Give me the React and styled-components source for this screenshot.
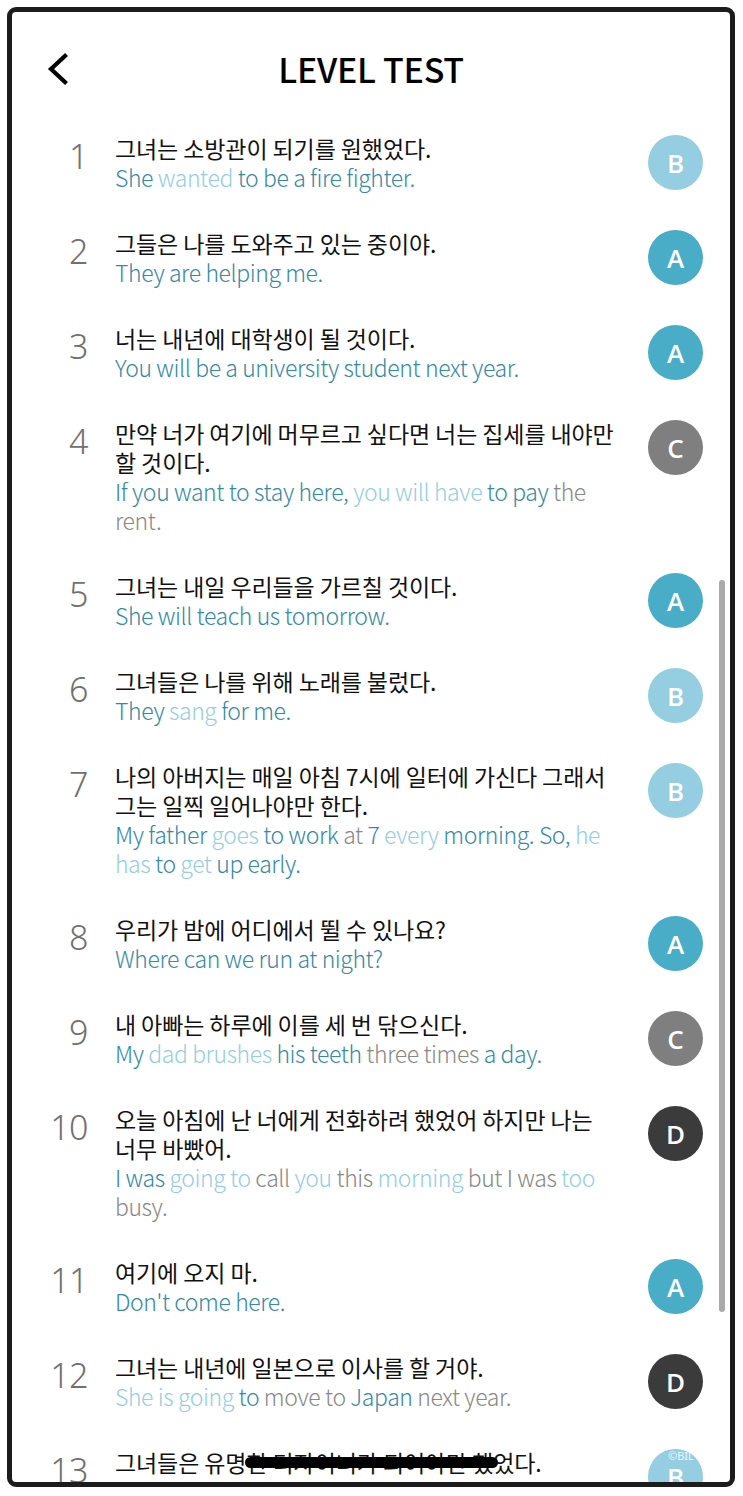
import React from 'react';
import styled, { createGlobalStyle } from 'styled-components';

const GlobalStyle = createGlobalStyle`
  html, body {
    margin: 0;
    padding: 0;
    background: #ffffff;
  }
  body {
    font-family: "Noto Sans CJK KR", "Noto Sans", sans-serif;
  }
`;

const COLORS = {
  d: '#3589a3',
  l: '#94cee0',
  g: '#878787',
};

const GRADES = {
  A: '#4aadc7',
  B: '#94cee0',
  C: '#7f7f7f',
  D: '#3b3b3b',
};

const questions = [
  {
    ko: '그녀는 소방관이 되기를 원했었다.',
    en: [['She', 'd'], [' wanted', 'l'], [' to be a fire fighter.', 'd']],
    grade: 'B',
  },
  {
    ko: '그들은 나를 도와주고 있는 중이야.',
    en: [['They are helping me.', 'd']],
    grade: 'A',
  },
  {
    ko: '너는 내년에 대학생이 될 것이다.',
    en: [['You will be a university student next year.', 'd']],
    grade: 'A',
  },
  {
    ko: '만약 너가 여기에 머무르고 싶다면 너는 집세를 내야만 할 것이다.',
    en: [
      ['If you want to stay here,', 'd'],
      [' you will have', 'l'],
      [' to pay', 'd'],
      [' the rent.', 'g'],
    ],
    grade: 'C',
  },
  {
    ko: '그녀는 내일 우리들을 가르칠 것이다.',
    en: [['She will teach us tomorrow.', 'd']],
    grade: 'A',
  },
  {
    ko: '그녀들은 나를 위해 노래를 불렀다.',
    en: [['They', 'd'], [' sang', 'l'], [' for me.', 'd']],
    grade: 'B',
  },
  {
    ko: '나의 아버지는 매일 아침 7시에 일터에 가신다 그래서 그는 일찍 일어나야만 한다.',
    en: [
      ['My father', 'd'],
      [' goes', 'l'],
      [' to work', 'd'],
      [' at', 'g'],
      [' 7', 'd'],
      [' every', 'l'],
      [' morning. So,', 'd'],
      [' he has', 'l'],
      [' to', 'd'],
      [' get', 'l'],
      [' up early.', 'd'],
    ],
    grade: 'B',
  },
  {
    ko: '우리가 밤에 어디에서 뛸 수 있나요?',
    en: [['Where can we run at night?', 'd']],
    grade: 'A',
  },
  {
    ko: '내 아빠는 하루에 이를 세 번 닦으신다.',
    en: [
      ['My', 'd'],
      [' dad brushes', 'l'],
      [' his teeth', 'd'],
      [' three times', 'g'],
      [' a day.', 'd'],
    ],
    grade: 'C',
  },
  {
    ko: '오늘 아침에 난 너에게 전화하려 했었어 하지만 나는 너무 바빴어.',
    en: [
      ['I was', 'd'],
      [' going to', 'l'],
      [' call', 'g'],
      [' you', 'l'],
      [' this', 'g'],
      [' morning', 'l'],
      [' but I was', 'g'],
      [' too', 'l'],
      [' busy.', 'g'],
    ],
    grade: 'D',
  },
  {
    ko: '여기에 오지 마.',
    en: [["Don't come here.", 'd']],
    grade: 'A',
  },
  {
    ko: '그녀는 내년에 일본으로 이사를 할 거야.',
    en: [
      ['She is going', 'l'],
      [' to', 'd'],
      [' move to', 'g'],
      [' Japan', 'd'],
      [' next year.', 'g'],
    ],
    grade: 'D',
  },
  {
    ko: '그녀들은 유명한 디자이너가 되어야만 했었다.',
    en: [['They had to be famous designers.', 'd']],
    grade: 'B',
    redacted: true,
  },
];

function BackIcon() {
  return (
    <svg width="24" height="36" viewBox="0 0 24 36" fill="none">
      <path
        d="M19 5 L5 18 L19 31"
        stroke="#000"
        strokeWidth="4.2"
        strokeLinecap="square"
        strokeLinejoin="miter"
      />
    </svg>
  );
}

export default function App() {
  return (
    <>
      <GlobalStyle />
      <Frame>
        <Header>
          <BackButton>
            <BackIcon />
          </BackButton>
          <Title>LEVEL TEST</Title>
          <span />
        </Header>
        <List>
          {questions.map((q, i) => (
            <Row key={i}>
              <Num>{i + 1}</Num>
              <Body>
                <Korean>
                  {q.ko}
                  {q.redacted && <Redaction />}
                </Korean>
                <English>
                  {q.en.map(([t, c], j) => (
                    <Word key={j} $tone={c}>
                      {t}
                    </Word>
                  ))}
                </English>
              </Body>
              <Grade $grade={q.grade}>
                {q.redacted && <Watermark>©BIL</Watermark>}
                {q.grade}
              </Grade>
            </Row>
          ))}
        </List>
        <ScrollThumb />
      </Frame>
    </>
  );
}

const Frame = styled.div`
  position: relative;
  box-sizing: border-box;
  margin: 7px 0 0 7px;
  width: 728px;
  height: 1480px;
  border: 5px solid #1c1c1c;
  border-radius: 9px;
  overflow: hidden;
  background: #fff;
`;

const Header = styled.div`
  display: grid;
  grid-template-columns: 1fr auto 1fr;
  align-items: center;
  height: 114px;
  padding: 0 35px;
`;

const BackButton = styled.div`
  display: flex;
  align-items: center;
  margin-left: -1px;
  height: 36px;
`;

const Title = styled.h1`
  margin: 0;
  font-family: "Noto Sans CJK KR", "Noto Sans", sans-serif;
  font-size: 34px;
  font-weight: 500;
  color: #000;
  letter-spacing: -0.3px;
  line-height: 1;
`;

const List = styled.div`
  display: flex;
  flex-direction: column;
  gap: 37px;
  padding: 8px 27px 0 0;
`;

const Row = styled.div`
  display: flex;
  align-items: flex-start;
`;

const Num = styled.div`
  width: 76px;
  flex-shrink: 0;
  text-align: right;
  font-family: "Noto Sans", sans-serif;
  font-size: 34px;
  font-weight: 300;
  color: #707070;
  line-height: 44px;
  letter-spacing: -0.5px;
`;

const Body = styled.div`
  flex: 1;
  min-width: 0;
  margin-left: 27px;
  padding-right: 26px;
`;

const Korean = styled.div`
  position: relative;
  font-size: 23px;
  font-weight: 400;
  line-height: 29px;
  color: #111;
  letter-spacing: -0.1px;
  word-break: keep-all;
`;

const English = styled.div`
  font-size: 23px;
  font-weight: 300;
  line-height: 29px;
  letter-spacing: -0.4px;
`;

const Word = styled.span`
  color: ${(p) => COLORS[p.$tone]};
`;

const Grade = styled.div`
  position: relative;
  flex-shrink: 0;
  display: flex;
  align-items: center;
  justify-content: center;
  width: 55px;
  height: 55px;
  margin-top: 1px;
  border-radius: 50%;
  background: ${(p) => GRADES[p.$grade]};
  color: #fff;
  font-family: "Open Sans", "Noto Sans", sans-serif;
  font-size: 26px;
  font-weight: 600;
  line-height: 1;
`;

const Watermark = styled.span`
  position: absolute;
  top: 1px;
  left: 20px;
  font-family: "Noto Sans", sans-serif;
  font-size: 11px;
  font-weight: 400;
  color: #eef7fa;
  white-space: nowrap;
`;

const Redaction = styled.span`
  position: absolute;
  left: 130px;
  top: 9px;
  width: 253px;
  height: 11px;
  border-radius: 6px;
  background: #000;
`;

const ScrollThumb = styled.div`
  position: absolute;
  left: 707px;
  top: 568px;
  width: 6px;
  height: 732px;
  border-radius: 3px;
  background: #aaaaaa;
`;
